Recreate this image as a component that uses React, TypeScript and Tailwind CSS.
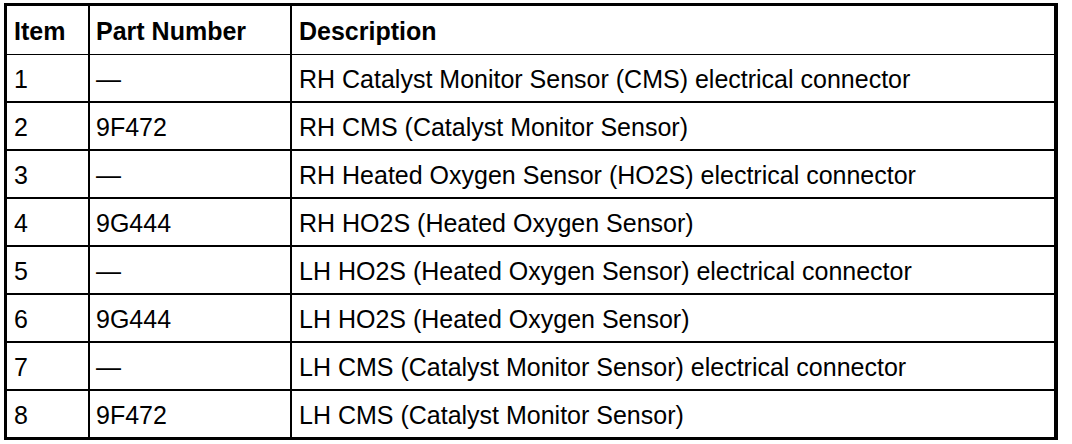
import React from "react";

interface Row {
  item: string;
  part: string;
  desc: string;
}

const rows: Array<Row> = [
  { item: "1", part: "—", desc: "RH Catalyst Monitor Sensor (CMS) electrical connector" },
  { item: "2", part: "9F472", desc: "RH CMS (Catalyst Monitor Sensor)" },
  { item: "3", part: "—", desc: "RH Heated Oxygen Sensor (HO2S) electrical connector" },
  { item: "4", part: "9G444", desc: "RH HO2S (Heated Oxygen Sensor)" },
  { item: "5", part: "—", desc: "LH HO2S (Heated Oxygen Sensor) electrical connector" },
  { item: "6", part: "9G444", desc: "LH HO2S (Heated Oxygen Sensor)" },
  { item: "7", part: "—", desc: "LH CMS (Catalyst Monitor Sensor) electrical connector" },
  { item: "8", part: "9F472", desc: "LH CMS (Catalyst Monitor Sensor)" },
];

const App = () => {
  return (
    <div className="w-[1072px] h-[444px] bg-white pl-[4px] pt-[3px] text-black font-['Liberation_Sans',Arial,sans-serif] text-[25px] leading-none">
      <div className="w-[1054px] border-[3px] border-r-4 border-black">
        {/* header */}
        <div className="grid grid-cols-[83px_202px_1fr] h-[49px] border-b border-black font-bold">
          <div className="flex items-center pt-[2px] pl-[7px] border-r-2 border-black">Item</div>
          <div className="flex items-center pt-[2px] pl-[6px] border-r-2 border-black">Part Number</div>
          <div className="flex items-center pt-[2px] pl-[7px]">Description</div>
        </div>
        {rows.map((row, i) => (
          <div
            key={row.item}
            className={
              i < rows.length - 1
                ? "grid grid-cols-[83px_202px_1fr] h-[48px] border-b-2 border-black"
                : "grid grid-cols-[83px_202px_1fr] h-[46px]"
            }
          >
            <div className="flex items-center pt-[2px] pl-[7px] border-r-2 border-black">{row.item}</div>
            <div className="flex items-center pt-[2px] pl-[6px] border-r-2 border-black">{row.part}</div>
            <div className="flex items-center pt-[2px] pl-[7px]">{row.desc}</div>
          </div>
        ))}
      </div>
    </div>
  );
};

export default App;
